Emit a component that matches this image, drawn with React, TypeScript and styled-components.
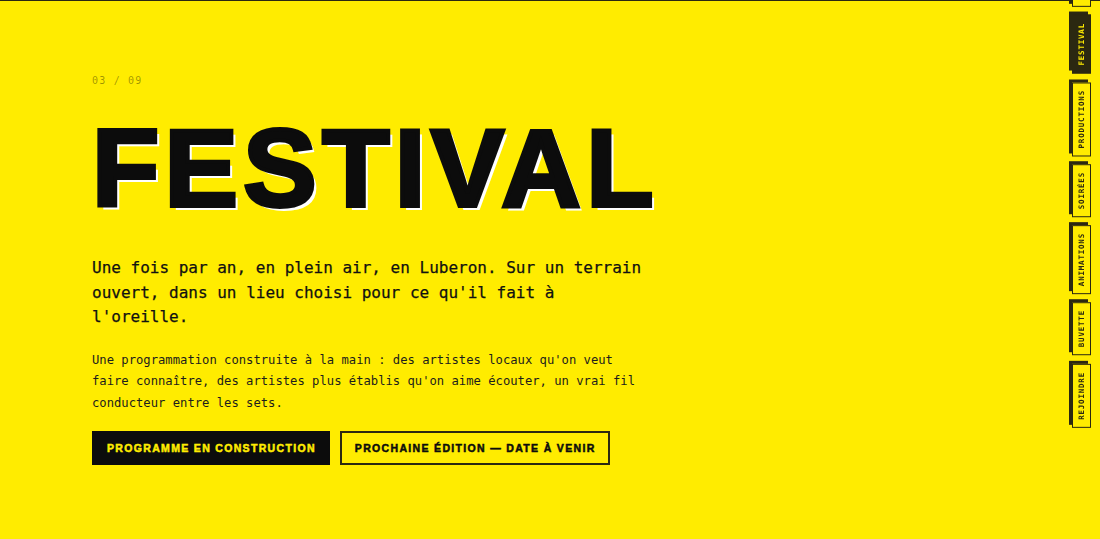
import React from 'react'
import styled, { createGlobalStyle } from 'styled-components'

const ink = '#0c0c0c'
const olive = '#2b2811'
const yellow = '#ffec00'

const GlobalStyle = createGlobalStyle`
  html, body {
    margin: 0;
    padding: 0;
    background: ${yellow};
  }
  body {
    border-top: 1px solid ${olive};
    min-height: 538px;
    font-family: 'DejaVu Sans Mono', 'Liberation Mono', monospace;
    color: ${ink};
    overflow: hidden;
  }
`

const Section = styled.main`
  display: flex;
  flex-direction: column;
  align-items: flex-start;
  padding: 73px 0 0 92px;
`

const Counter = styled.div`
  font-size: 10px;
  line-height: 14px;
  letter-spacing: 1.2px;
  color: rgba(0, 0, 0, 0.38);
`

const Headline = styled.h1`
  margin: 25px 0 0 0;
  font-family: 'Liberation Sans', Arial, sans-serif;
  font-weight: 700;
  font-size: 110px;
  line-height: 1;
  letter-spacing: 5.4px;
  color: ${ink};
  -webkit-text-stroke: 4px ${ink};
  text-shadow: 4px 4px 0 #ffffff;
`

const Lead = styled.p`
  margin: 33px 0 0;
  max-width: 560px;
  font-size: 16px;
  line-height: 24.5px;
  font-weight: 500;
  color: #111;
  -webkit-text-stroke: 0.25px #111;
`

const Body = styled.p`
  margin: 20px 0 0;
  max-width: 560px;
  font-size: 12.2px;
  line-height: 21.5px;
  color: #1c1c1c;
`

const Actions = styled.div`
  display: flex;
  gap: 10px;
  margin-top: 17px;
`

const Button = styled.a<{ $solid?: boolean }>`
  display: flex;
  align-items: center;
  height: 34px;
  box-sizing: border-box;
  padding: 0 12px 0 13px;
  font-family: 'Liberation Sans', Arial, sans-serif;
  font-weight: 700;
  font-size: 10.5px;
  letter-spacing: 1.33px;
  text-decoration: none;
  background: ${p => (p.$solid ? ink : 'transparent')};
  color: ${p => (p.$solid ? yellow : ink)};
  border: 2px solid ${p => (p.$solid ? ink : olive)};
  -webkit-text-stroke: 0.5px currentColor;
`

const SideNav = styled.nav`
  position: fixed;
  top: -118px;
  right: 9px;
  display: flex;
  flex-direction: column;
  gap: 8px;
`

const Tab = styled.a<{ $active?: boolean }>`
  display: block;
  width: 17px;
  box-sizing: content-box;
  padding: 7px 0;
  writing-mode: vertical-rl;
  transform: rotate(180deg);
  text-align: center;
  font-size: 7.5px;
  line-height: 17px;
  font-weight: 700;
  letter-spacing: 0.8px;
  text-decoration: none;
  border: 1.5px solid ${olive};
  background: ${p => (p.$active ? olive : yellow)};
  color: ${p => (p.$active ? yellow : olive)};
  box-shadow: 3px 3px 0 ${olive};
`

const tabs = ['ACCUEIL', 'COLLECTIF', 'FESTIVAL', 'PRODUCTIONS', 'SOIRÉES', 'ANIMATIONS', 'BUVETTE', 'REJOINDRE']

export default function App() {
  return (
    <>
      <GlobalStyle />
      <Section>
        <Counter>03 / 09</Counter>
        <Headline>FESTIVAL</Headline>
        <Lead>
          Une fois par an, en plein air, en Luberon. Sur un terrain ouvert, dans un lieu choisi pour ce qu'il fait à
          l'oreille.
        </Lead>
        <Body>
          Une programmation construite à la main : des artistes locaux qu'on veut faire connaître, des artistes plus
          établis qu'on aime écouter, un vrai fil conducteur entre les sets.
        </Body>
        <Actions>
          <Button $solid>PROGRAMME EN CONSTRUCTION</Button>
          <Button>PROCHAINE ÉDITION — DATE À VENIR</Button>
        </Actions>
      </Section>
      <SideNav>
        {tabs.map(t => (
          <Tab key={t} $active={t === 'FESTIVAL'}>
            {t}
          </Tab>
        ))}
      </SideNav>
    </>
  )
}
